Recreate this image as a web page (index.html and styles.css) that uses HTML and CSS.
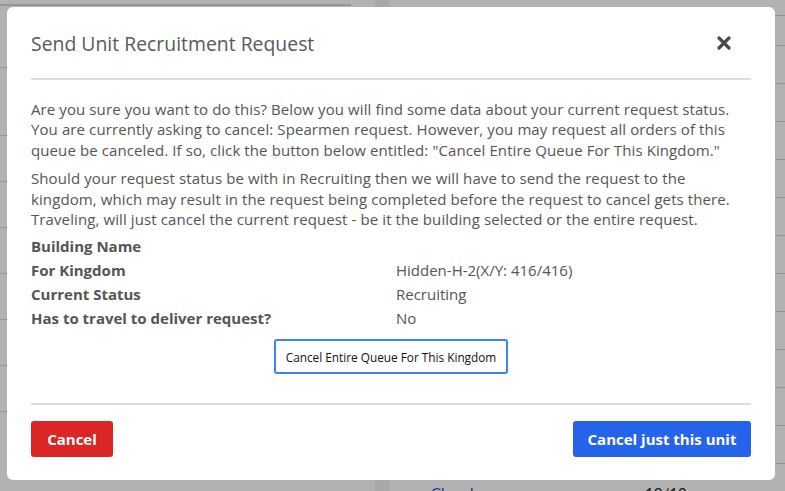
FILE: index.html
```html
<!DOCTYPE html>
<html lang="en">
<head>
<meta charset="utf-8">
<title>Send Unit Recruitment Request</title>
<link rel="stylesheet" href="styles.css">
</head>
<body>
<div class="page">
  <section class="panel panel-left">
    <div class="left-head"></div>
    <div class="lrow lrow-tall"></div>
    <div class="lrow"></div>
    <div class="lrow"></div>
    <div class="lrow"></div>
    <div class="lrow"></div>
    <div class="lrow"></div>
    <div class="lrow"></div>
    <div class="lrow"></div>
    <div class="lrow lrow-last"><span class="c1">Recruiting</span><span class="c2">9 minute(s) left</span></div>
  </section>
  <section class="panel panel-right">
    <div class="rrow rrow-first"></div>
    <div class="rrow rrow-short"></div>
    <div class="rrow"></div>
    <div class="rrow"></div>
    <div class="rrow"></div>
    <div class="rrow"></div>
    <div class="rrow"></div>
    <div class="rrow"></div>
    <div class="rrow"></div>
    <div class="rrow"></div>
    <div class="rrow"></div>
    <div class="rrow"></div>
    <div class="rrow"></div>
    <div class="rrow rrow-last"><a class="link">Church</a><span class="r2">12/12</span></div>
  </section>
</div>
<div class="overlay"></div>
<div class="modal" role="dialog">
  <div class="modal-head">
    <h2 class="modal-title">Send Unit Recruitment Request</h2>
    <button class="close" aria-label="Close">
      <svg width="14" height="14" viewBox="0 0 14 14"><path d="M2 2 L12 12 M12 2 L2 12" stroke="#4a4a4a" stroke-width="3.2" stroke-linecap="round" fill="none"/></svg>
    </button>
  </div>
  <div class="modal-body">
    <p class="para">Are you sure you want to do this? Below you will find some data about your current request status.<br>You are currently asking to cancel: Spearmen request. However, you may request all orders of this<br>queue be canceled. If so, click the button below entitled: "Cancel Entire Queue For This Kingdom."</p>
    <p class="para">Should your request status be with in Recruiting then we will have to send the request to the<br>kingdom, which may result in the request being completed before the request to cancel gets there.<br>Traveling, will just cancel the current request - be it the building selected or the entire request.</p>
    <dl class="details">
      <dt>Building Name</dt><dd></dd>
      <dt>For Kingdom</dt><dd>Hidden-H-2(X/Y: 416/416)</dd>
      <dt>Current Status</dt><dd>Recruiting</dd>
      <dt>Has to travel to deliver request?</dt><dd>No</dd>
    </dl>
    <div class="queue-wrap"><button class="queue-btn">Cancel Entire Queue For This Kingdom</button></div>
  </div>
  <div class="modal-foot">
    <button class="btn btn-red">Cancel</button>
    <button class="btn btn-blue">Cancel just this unit</button>
  </div>
</div>
</body>
</html>
```
FILE: styles.css
```css
* { box-sizing: border-box; }
html, body { margin: 0; padding: 0; }
body {
  width: 785px;
  height: 491px;
  overflow: hidden;
  font-family: "Open Sans", "Noto Sans", sans-serif;
  background: #f1f1f1;
}
.page {
  display: flex;
  gap: 15px;
  height: 491px;
  overflow: hidden;
}
.panel { background: #fff; overflow: hidden; }
.panel-left { width: 375px; flex: none; }
.panel-right { flex: 1; }
.left-head { height: 6px; width: 351px; border-bottom: 2px solid #d8d8d8; }
.lrow { height: 46px; border-bottom: 1px solid #d6d6d6; }
.lrow-tall { height: 62px; }
.lrow-tall + .lrow { height: 68px; }
.lrow-last {
  height: 60px;
  border: 0;
  padding-top: 22px;
  display: flex;
  font-size: 16px;
  color: #222;
  font-family: "Lato", sans-serif;
}
.lrow-last .c1 { margin-left: 68px; width: 172px; }
.rrow { height: 38px; border-bottom: 1px solid #d6d6d6; }
.rrow-first { height: 16px; }
.rrow-short { height: 30px; }
.rrow-last {
  height: 50px;
  border: 0;
  padding-top: 20px;
  display: flex;
  font-size: 15px;
  font-family: "Lato", sans-serif;
  color: #222;
}
.rrow-last .link { margin-left: 41px; width: 214px; color: #1d4ed8; text-decoration: underline; }
.overlay {
  position: fixed;
  inset: 0;
  background: rgba(0, 0, 0, 0.3);
}
.modal {
  position: fixed;
  left: 7px;
  top: 7px;
  width: 768px;
  height: 473px;
  background: #fff;
  border-radius: 6px;
  padding: 0 24px 23px;
  display: flex;
  flex-direction: column;
  color: #555;
}
.modal-head {
  display: flex;
  align-items: center;
  justify-content: space-between;
  height: 73px;
  border-bottom: 2px solid #ddd;
  padding-top: 1px;
}
.modal-title {
  margin: 0;
  font-size: 19.4px;
  font-weight: 400;
  color: #5a5a5a;
}
.close {
  border: 0;
  background: none;
  padding: 0;
  margin-right: 20px;
  width: 14px;
  height: 14px;
  display: flex;
}
.modal-body { padding-top: 19px; flex: 1; }
.para {
  margin: 0 0 8px;
  font-size: 15px;
  line-height: 20.4px;
  letter-spacing: 0.1px;
}
.para + .para { margin-bottom: 5px; }
.details {
  display: grid;
  grid-template-columns: 365px 1fr;
  margin: 0;
  font-size: 15px;
  line-height: 24px;
}
.details dt { font-weight: 700; }
.details dd { margin: 0; }
.queue-wrap { display: flex; justify-content: center; margin-top: 9px; }
.queue-btn {
  font-family: inherit;
  font-size: 11.8px;
  color: #111;
  background: #fff;
  border: 2px solid #3b82f6;
  border-radius: 3px;
  width: 234px;
  height: 35px;
  padding: 0;
  white-space: nowrap;
}
.modal-foot {
  display: flex;
  justify-content: space-between;
  border-top: 2px solid #ddd;
  padding-top: 16px;
}
.btn {
  font-family: inherit;
  font-size: 15px;
  font-weight: 700;
  color: #fff;
  border: 0;
  border-radius: 3px;
  height: 36px;
  padding: 0;
  white-space: nowrap;
}
.btn-red { background: #dc2626; width: 82px; }
.btn-blue { background: #2563eb; width: 178px; }
```
